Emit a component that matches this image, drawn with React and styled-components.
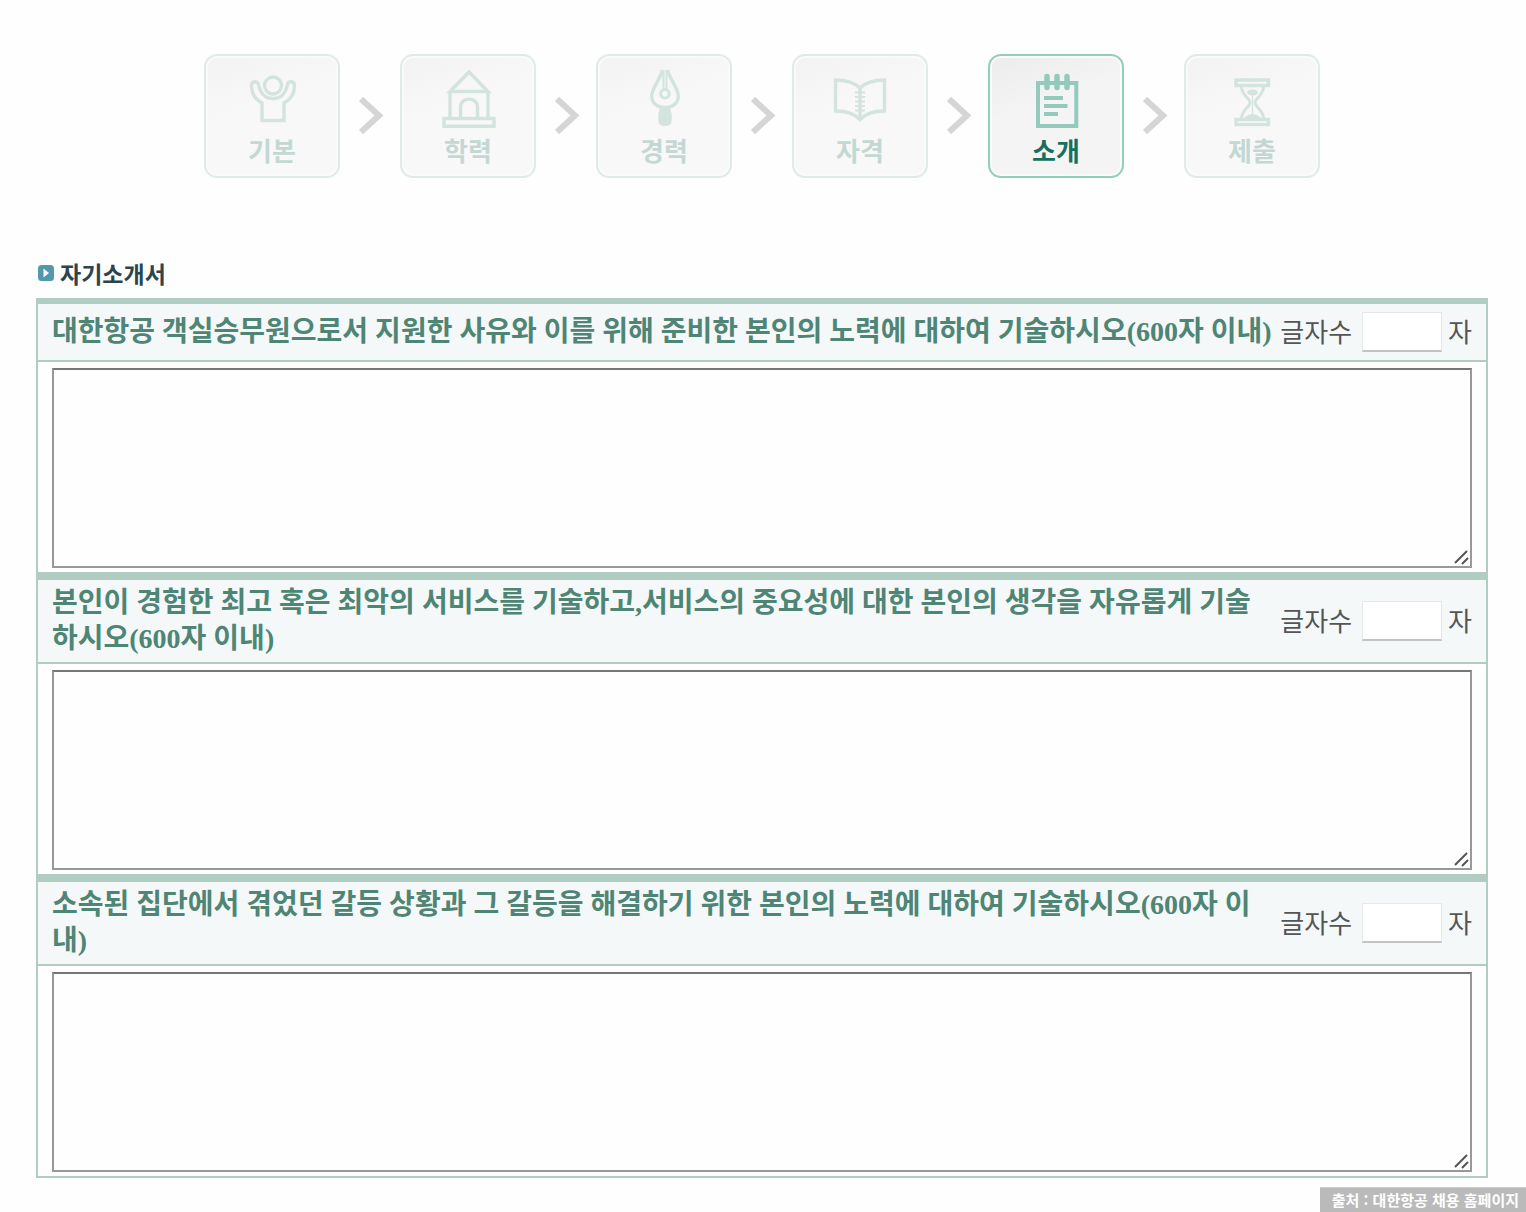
import React from "react";
import styled, { createGlobalStyle } from "styled-components";

const sans = `"Noto Sans CJK KR", "Noto Sans", sans-serif`;
const body = `"Liberation Serif", "Noto Sans CJK KR", serif`;

const GlobalStyle = createGlobalStyle`
  *, *::before, *::after { box-sizing: border-box; }
  body { margin: 0; background: #fefefe; font-family: ${body}; }
`;

const Page = styled.div`
  display: flex;
  flex-direction: column;
`;

const Main = styled.main`
  padding: 54px 38px 0 36px;
`;

const Steps = styled.ol`
  display: flex;
  justify-content: center;
  margin: 0 0 76px;
  padding: 0;
  list-style: none;
`;

const StepItem = styled.li`
  display: flex;
  align-items: center;
`;

const StepButton = styled.button`
  display: flex;
  flex-direction: column;
  align-items: center;
  width: 136px;
  height: 124px;
  padding: 10px 0 0;
  border: 2px solid ${(p) => (p.$active ? "#93cdbd" : "#dfebe8")};
  border-radius: 13px;
  background: ${(p) =>
    p.$active
      ? "linear-gradient(160deg, #ececec, #f4f4f4 40%)"
      : "linear-gradient(160deg, #f2f2f2, #f8f8f8 40%)"};
  box-shadow: inset 0 0 0 2px #fafafa;
  color: ${(p) => (p.$active ? "#17705f" : "#c3d8d3")};
  font: 700 26px/40px ${sans};
  cursor: pointer;
`;

const StepIcon = styled.svg`
  flex: none;
  width: 60px;
  height: 64px;
  fill: none;
  stroke: ${(p) => (p.$active ? "#93cabb" : "#d3e4df")};
  color: ${(p) => (p.$active ? "#93cabb" : "#d3e4df")};
  stroke-width: 3.4;
`;

const Arrow = styled.svg`
  width: 26px;
  height: 40px;
  margin: 0 16px 0 18px;
  fill: none;
  stroke: #d5d5d5;
  stroke-width: 6;
`;

const SectionTitle = styled.h2`
  display: flex;
  align-items: center;
  gap: 5px;
  margin: 0 0 6px;
  padding-left: 1px;
  color: #2c444e;
  font: 700 23px/38px ${sans};
`;

const TitleMark = styled.svg`
  width: 18px;
  height: 18px;
`;

const Form = styled.form`
  border: 2px solid #b1ccc0;
  border-top-width: 6px;
`;

const Question = styled.section`
  & + & { border-top: 8px solid #b1ccc0; }
`;

const QuestionHeader = styled.div`
  display: flex;
  align-items: center;
  gap: 8px;
  min-height: 56px;
  padding: 5px 14px;
  background: #f4f8f9;
`;

const QuestionLabel = styled.label`
  flex: 1;
  color: #4f8574;
  font: 700 28px/36px ${body};
`;

const Counter = styled.div`
  display: flex;
  flex: none;
  align-items: center;
  gap: 6px;
  color: #555;
  font: 400 26px/36px ${body};
`;

const CountLabel = styled.label`
  padding: 4px 4px 0 0;
`;

const CountUnit = styled.span`
  padding-top: 4px;
`;

const CountInput = styled.input`
  width: 80px;
  height: 40px;
  padding: 0 8px;
  border: 1px solid #e4e8e8;
  border-bottom: 2px solid #c2c4c4;
  border-radius: 0;
  background: #fff;
  font: 400 24px/36px ${body};
  text-align: right;
`;

const AnswerArea = styled.div`
  position: relative;
  padding: 6px 14px 4px;
  border-top: 2px solid #b1ccc0;
`;

const Answer = styled.textarea`
  display: block;
  width: 100%;
  height: 200px;
  padding: 8px;
  border: 2px solid #999;
  border-top-color: #767676;
  border-radius: 0;
  background: #fefefe;
  font: 400 24px/36px ${body};
  resize: none;
`;

const Grip = styled.svg`
  position: absolute;
  right: 16px;
  bottom: 6px;
  width: 18px;
  height: 18px;
  fill: none;
  stroke: #555;
  stroke-width: 2;
  pointer-events: none;
`;

const Source = styled.footer`
  align-self: flex-end;
  margin-top: 9px;
  padding: 0 7px 0 12px;
  border-top: 1px solid #ccc;
  background: #bababa;
  color: #fff;
  font: 700 15px/24px ${sans};
`;

const icons = {
  person: (
    <>
      <circle cx="69" cy="31.5" r="8.5" />
      <path d="M58 66.500V49C50.500 45 47.500 39 47.500 32C47.500 26.500 54 26.500 54.800 31.500C56.500 40 62 44.700 69 44.700S81.500 40 83.200 31.500C84 26.500 90.500 26.500 90.500 32C90.500 39 87.500 45 80 49V66.500Z" />
    </>
  ),
  school: (
    <>
      <path d="M50 37.500L69 18L88 37.500ZM50 37.500V64M88 37.500V64" />
      <path d="M60.500 64V53C60.500 42.500 77.500 42.500 77.500 53V64M44 64.500H94V72.300H44Z" />
    </>
  ),
  pen: (
    <>
      <path d="M66.500 16C63 28 55.700 34 55.700 42C55.700 49 61 53.500 69 53.500S82.300 49 82.300 42C82.300 34 75 28 71.500 16" />
      <path d="M67.500 16V35M70.500 16V35" strokeWidth="2" />
      <circle cx="69" cy="39.700" r="4.300" strokeWidth="3" />
      <path d="M64 54H74L75.700 60V66Q75.700 72 69 72T62.300 66V60Z" fill="currentColor" stroke="none" />
    </>
  ),
  book: (
    <>
      <path d="M68 34C62 28 54 26 43.500 26V57C54 57 62 59 68 65.500C74 59 82 57 92.500 57V26C82 26 74 28 68 34Z" />
      <path d="M68 34V65" />
      <path d="M63 38.500H73M63 43H73M63 47.500H73M63 52H73M63 56.500H73" strokeWidth="2.200" />
    </>
  ),
  note: (
    <>
      <path d="M50 29H88.300V72H50Z" strokeWidth="4" />
      <path d="M59 22.500V33.500M69 22.500V33.500M79 22.500V33.500" strokeWidth="5.500" strokeLinecap="round" />
      <path d="M56 44H75M56 52H79.500M56 60H70" strokeWidth="4.200" />
    </>
  ),
  hourglass: (
    <>
      <path d="M52 26H84.500V31.500H52ZM52 65.500H84.500V70.500H52Z" />
      <path d="M57.500 33C58 42 66 44 66 48.500S58 56 57.500 64M79.500 33C79 42 71 44 71 48.500S79 56 79.500 64" strokeWidth="3" />
      <ellipse cx="68.500" cy="38.500" rx="5.500" ry="3" fill="currentColor" stroke="none" />
      <path d="M68.500 41V62" strokeWidth="1.200" />
      <path d="M60 64Q68.500 56 77 64Z" fill="currentColor" stroke="none" />
    </>
  ),
};

const steps = [
  { label: "기본", icon: "person" },
  { label: "학력", icon: "school" },
  { label: "경력", icon: "pen" },
  { label: "자격", icon: "book" },
  { label: "소개", icon: "note", active: true },
  { label: "제출", icon: "hourglass" },
];

const questions = [
  "대한항공 객실승무원으로서 지원한 사유와 이를 위해 준비한 본인의 노력에 대하여 기술하시오(600자 이내)",
  "본인이 경험한 최고 혹은 최악의 서비스를 기술하고,서비스의 중요성에 대한 본인의 생각을 자유롭게 기술하시오(600자 이내)",
  "소속된 집단에서 겪었던 갈등 상황과 그 갈등을 해결하기 위한 본인의 노력에 대하여 기술하시오(600자 이내)",
];

export default function App() {
  return (
    <Page lang="ko">
      <GlobalStyle />
      <Main>
        <Steps>
          {steps.map((step, i) => (
            <StepItem key={step.label}>
              {i > 0 && (
                <Arrow viewBox="0 0 26 40" aria-hidden="true">
                  <path d="M3 3L21 19.500L3 36" />
                </Arrow>
              )}
              <StepButton
                type="button"
                $active={step.active}
                aria-current={step.active ? "step" : undefined}
              >
                <StepIcon viewBox="38 12 60 64" $active={step.active} aria-hidden="true">
                  {icons[step.icon]}
                </StepIcon>
                {step.label}
              </StepButton>
            </StepItem>
          ))}
        </Steps>
        <SectionTitle>
          <TitleMark viewBox="0 0 18 18" aria-hidden="true">
            <rect x="1" y="1" width="16" height="16" rx="3.500" fill="#5299ae" />
            <path d="M6.500 4.500L12 9L6.500 13.500Z" fill="#fff" />
          </TitleMark>
          자기소개서
        </SectionTitle>
        <Form>
          {questions.map((text, i) => (
            <Question key={text}>
              <QuestionHeader>
                <QuestionLabel htmlFor={`answer-${i}`}>{text}</QuestionLabel>
                <Counter>
                  <CountLabel htmlFor={`count-${i}`}>글자수</CountLabel>
                  <CountInput id={`count-${i}`} type="text" readOnly />
                  <CountUnit>자</CountUnit>
                </Counter>
              </QuestionHeader>
              <AnswerArea>
                <Answer id={`answer-${i}`} />
                <Grip viewBox="0 0 18 18" aria-hidden="true">
                  <path d="M3 15L15 3M10 16L16 10" />
                </Grip>
              </AnswerArea>
            </Question>
          ))}
        </Form>
      </Main>
      <Source>출처 : 대한항공 채용 홈페이지</Source>
    </Page>
  );
}
